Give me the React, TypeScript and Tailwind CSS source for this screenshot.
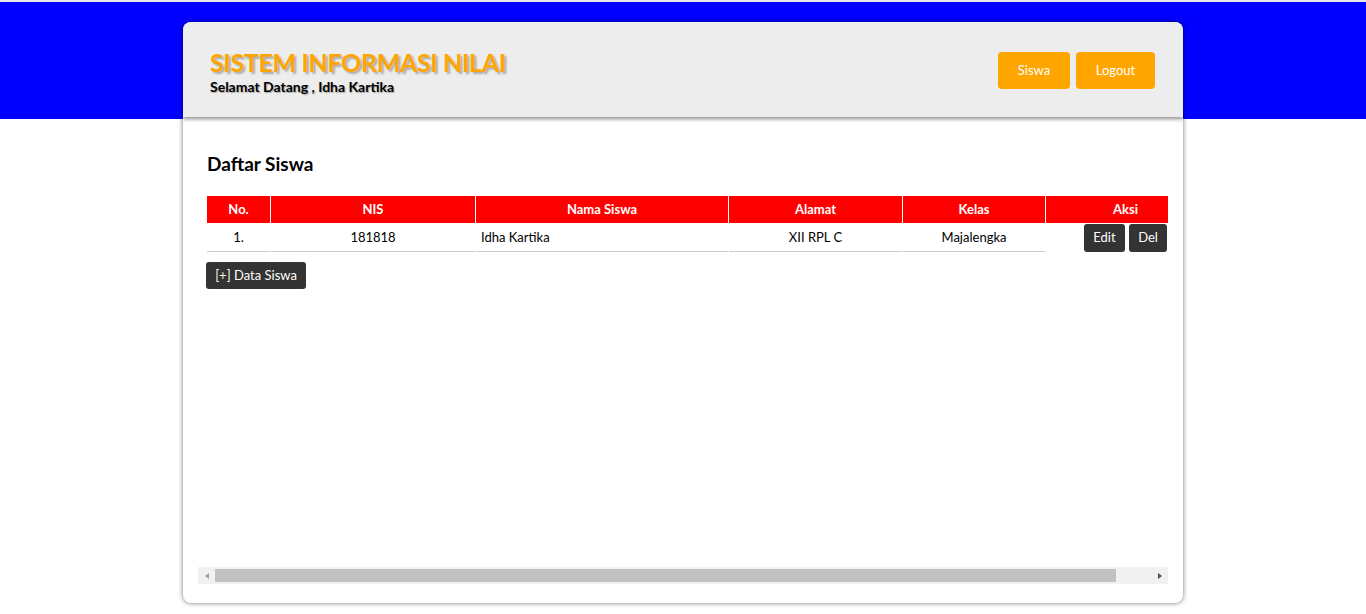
import React from "react";

export default function App() {
  return (
    <div className="min-h-[614px] w-full pt-[22px] font-['Lato',sans-serif] bg-[linear-gradient(to_bottom,#e6e6e6_0px,#e6e6e6_2px,#0000ff_2px,#0000ff_119px,#ffffff_119px)]">
      <div className="mx-auto flex h-[581px] w-[1000px] flex-col overflow-hidden rounded-[8px] bg-white shadow-[0_0_5px_rgba(0,0,0,0.55)]">
        <header className="relative z-10 flex h-[95px] shrink-0 items-start justify-between bg-[#ededed] pl-[27px] pr-[28px] shadow-[0_2px_4px_rgba(0,0,0,0.45)]">
          <div className="pt-[24px]">
            <h1 className="text-[25px] font-bold leading-[32px] tracking-[-0.35px] text-[#ffa500] [text-shadow:2px_2px_2px_#aaaaaa]">
              SISTEM INFORMASI NILAI
            </h1>
            <p className="text-[14px] font-bold leading-[18px] text-black [text-shadow:1px_1px_1px_#aaaaaa]">
              Selamat Datang , Idha Kartika
            </p>
          </div>
          <div className="mt-[30px] flex gap-[6px]">
            <button className="h-[37px] w-[72px] rounded-[4px] bg-[#ffa500] text-[13px] text-white">Siswa</button>
            <button className="h-[37px] w-[79px] rounded-[4px] bg-[#ffa500] text-[13px] text-white">Logout</button>
          </div>
        </header>
        <div className="flex flex-1 flex-col px-[15px] pb-[19px]">
          <div className="flex-1 overflow-hidden">
            <div className="w-[1008px] pl-[8px] pt-[35px]">
              <h2 className="pl-[1px] text-[19px] font-bold leading-[24px] text-black">Daftar Siswa</h2>
              <table className="mt-[19px] table-fixed border-separate border-spacing-[1px] text-[13px] text-black">
                <thead>
                  <tr className="bg-[#ff0000] text-white">
                    <th className="h-[27px] w-[63px] bg-[#ff0000] font-bold">No.</th>
                    <th className="h-[27px] w-[204px] bg-[#ff0000] font-bold">NIS</th>
                    <th className="h-[27px] w-[252px] bg-[#ff0000] font-bold">Nama Siswa</th>
                    <th className="h-[27px] w-[173px] bg-[#ff0000] font-bold">Alamat</th>
                    <th className="h-[27px] w-[142px] bg-[#ff0000] font-bold">Kelas</th>
                    <th className="h-[27px] w-[159px] bg-[#ff0000] font-bold">Aksi</th>
                  </tr>
                </thead>
                <tbody>
                  <tr>
                    <td className="h-[28px] border-b border-[#cccccc] text-center">1.</td>
                    <td className="h-[28px] border-b border-[#cccccc] text-center">181818</td>
                    <td className="h-[28px] border-b border-[#cccccc] pl-[5px] text-left">Idha Kartika</td>
                    <td className="h-[28px] border-b border-[#cccccc] text-center">XII RPL C</td>
                    <td className="h-[28px] border-b border-[#cccccc] text-center">Majalengka</td>
                    <td className="h-[28px] p-0 text-center align-top">
                      <div className="flex justify-center gap-[4px]">
                        <button className="h-[28px] w-[41px] rounded-[3px] bg-[#333333] text-[13px] text-white">Edit</button>
                        <button className="h-[28px] w-[38px] rounded-[3px] bg-[#333333] text-[13px] text-white">Del</button>
                      </div>
                    </td>
                  </tr>
                </tbody>
              </table>
              <button className="mt-[9px] h-[27px] w-[100px] rounded-[3px] bg-[#333333] text-[13px] text-white">
                <span className="text-[#fff8e0]">[+]</span> Data Siswa
              </button>
            </div>
          </div>
          <div className="flex h-[17px] shrink-0 bg-[#f1f1f1]">
            <div className="flex w-[17px] items-center justify-center">
              <div className="h-0 w-0 border-y-[3.5px] border-r-[4px] border-y-transparent border-r-[#a3a3a3]" />
            </div>
            <div className="flex flex-1 items-center">
              <div className="h-[13px] w-[901px] bg-[#c1c1c1]" />
            </div>
            <div className="flex w-[17px] items-center justify-center">
              <div className="h-0 w-0 border-y-[3.5px] border-l-[4px] border-y-transparent border-l-[#505050]" />
            </div>
          </div>
        </div>
      </div>
    </div>
  );
}
